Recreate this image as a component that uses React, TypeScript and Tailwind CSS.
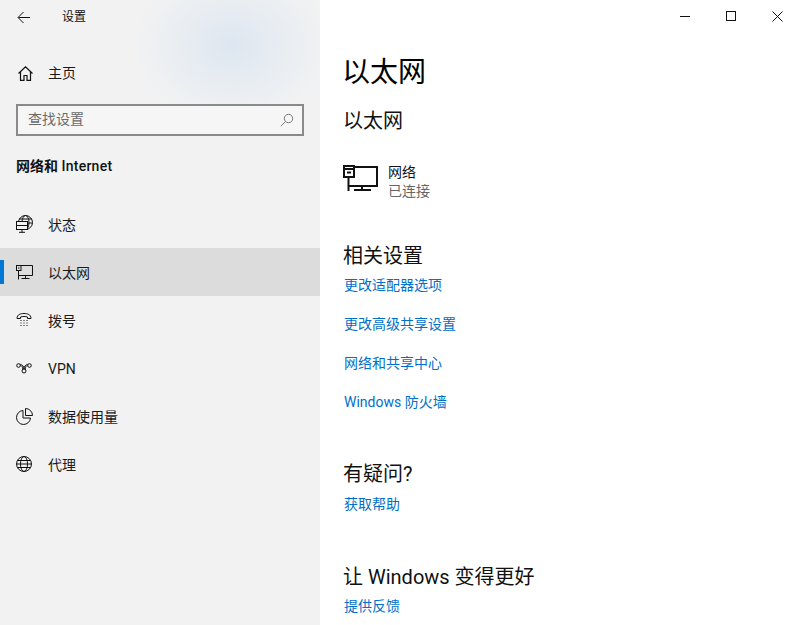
import React from "react";

const font = "font-['Roboto','Noto_Sans_CJK_SC',sans-serif]";

const BackIcon = () => (
  <svg width="14" height="13" viewBox="0 0 14 13" fill="none" stroke="#111" strokeWidth="1">
    <path d="M13 6.500H1.500M6.500 1 1 6.500 6.500 12" />
  </svg>
);

const HomeIcon = () => (
  <svg width="15" height="15" viewBox="0 0 15 15" fill="none" stroke="#111" strokeWidth="1.200">
    <path d="M.5 7.500 7.500 .8l7 6.700M2.500 6v8.300h3.500V9.500h3v4.800h3.500V6" />
  </svg>
);

const SearchIcon = () => (
  <svg width="14" height="14" viewBox="0 0 14 14" fill="none" stroke="#777" strokeWidth="1">
    <circle cx="8.500" cy="5.500" r="4.200" />
    <path d="M5.500 8.500 .8 13.200" />
  </svg>
);

const StatusIcon = () => (
  <svg width="17" height="18" viewBox="0 0 17 18" fill="none" stroke="#111" strokeWidth="1">
    <circle cx="9.500" cy="7.500" r="7" />
    <ellipse cx="9.500" cy="7.500" rx="3.500" ry="7" />
    <path d="M3 4h13M12 8h4.500" />
    <rect x=".5" y="6.500" width="11" height="8" fill="#f2f2f2" />
    <path d="M.5 10.500h11M6 14.500v2.800M3 17.300h6" />
  </svg>
);

const EthernetIcon = () => (
  <svg width="17" height="15" viewBox="0 0 17 15" fill="none" stroke="#111" strokeWidth="1">
    <path d="M3 .5h13.500v10H2.500M2.500 6v8.500M9.500 10.500v3.500M5.500 13.500h8" />
    <rect x=".5" y=".5" width="4.500" height="5" fill="#dcdcdc" />
    <path d="M2 3h1.500" />
  </svg>
);

const DialIcon = () => (
  <svg width="16" height="14" viewBox="0 0 16 14" fill="none" stroke="#111" strokeWidth="1">
    <path d="M1 5.500C1 1.500 4.500.5 8 .5s7 1 7 5h-3.500V4c-2-.7-5-.7-7 0v1.500z" />
    <path d="M4.500 7.500h1M7.500 7.500h1M10.500 7.500h1M4.500 10h1M7.500 10h1M10.500 10h1M4.500 12.500h1M7.500 12.500h1M10.500 12.500h1" />
  </svg>
);

const VpnIcon = () => (
  <svg width="16" height="11" viewBox="0 0 16 11" fill="none" stroke="#111" strokeWidth="1">
    <circle cx="2.500" cy="2.500" r="1.800" />
    <circle cx="13.500" cy="2.500" r="1.800" />
    <circle cx="8" cy="8" r="2" />
    <path d="M4.300 2.500c1.500 0 2.200 1.500 2.700 3.800M11.700 2.500c-1.500 0-2.200 1.500-2.700 3.800M4.300 1.200C6 1.500 8 4 9.500 6.500M11.700 1.200C10 1.500 8 4 6.500 6.500" />
  </svg>
);

const DataIcon = () => (
  <svg width="17" height="17" viewBox="0 0 17 17" fill="none" stroke="#111" strokeWidth="1">
    <path d="M7 2.500A7 7 0 1 0 14.500 10H7z" />
    <path d="M9.500.5a7 7 0 0 1 7 7h-7z" />
  </svg>
);

const GlobeIcon = () => (
  <svg width="16" height="16" viewBox="0 0 16 16" fill="none" stroke="#111" strokeWidth="1">
    <circle cx="8" cy="8" r="7.500" />
    <ellipse cx="8" cy="8" rx="3.500" ry="7.500" />
    <path d="M1.500 4.500h13M1.500 11.500h13M.5 8h15" />
  </svg>
);

const BigNetworkIcon = () => (
  <svg width="35" height="27" viewBox="0 0 35 27" fill="none" stroke="#111" strokeWidth="2">
    <path d="M5 2h29v19H5.500M5.500 12v14M19 21v5M11 25h17" />
    <rect x="1" y="1" width="10" height="11" fill="#fff" />
    <path d="M1 4h10M4 7.500h4" />
  </svg>
);

const navItems: { label: string; icon: React.ReactNode; active?: boolean }[] = [
  { label: "状态", icon: <StatusIcon /> },
  { label: "以太网", icon: <EthernetIcon />, active: true },
  { label: "拨号", icon: <DialIcon /> },
  { label: "VPN", icon: <VpnIcon /> },
  { label: "数据使用量", icon: <DataIcon /> },
  { label: "代理", icon: <GlobeIcon /> },
];

const NavRow = ({ label, icon, active }: { label: string; icon: React.ReactNode; active?: boolean }) => (
  <div className={`relative flex h-12 items-center ${active ? "bg-[#dcdcdc]" : ""}`}>
    {active && <div className="absolute left-0 top-3 h-6 w-1 bg-[#0078d7]" />}
    <div className="flex w-12 shrink-0 items-center justify-start pl-4">{icon}</div>
    <span className="mt-[2px] text-sm text-[#1a1a1a]">{label}</span>
  </div>
);

const SideBar = () => (
  <aside className="flex h-full w-80 shrink-0 flex-col bg-[radial-gradient(ellipse_100px_80px_at_232px_45px,#dde6f0_0%,#e8edf2_50%,#f2f2f2_100%)]">
    <div className="flex h-8 items-center pt-[2px]">
      <div className="flex w-[62px] items-center pl-[17px]">
        <BackIcon />
      </div>
      <span className="text-xs text-[#111]">设置</span>
    </div>
    <div className="mt-[17px] flex h-12 items-center">
      <div className="flex w-12 items-center pl-[18px]">
        <HomeIcon />
      </div>
      <span className="text-sm text-[#1a1a1a]">主页</span>
    </div>
    <div className="mx-4 mt-[7px] flex h-[32px] items-center justify-between border-2 border-[#8a8a8a] bg-[#f6f6f6] pl-[10px] pr-2">
      <span className="-mt-[2px] text-sm text-[#6b6b6b]">查找设置</span>
      <SearchIcon />
    </div>
    <h2 className="mt-5 pl-4 text-sm font-bold leading-5 text-[#111]">
      网络和 <span className="font-medium tracking-[0.25px]">Internet</span>
    </h2>
    <nav className="mt-6 flex flex-col">
      {navItems.map((item) => (
        <NavRow key={item.label} {...item} />
      ))}
    </nav>
  </aside>
);

const Link = ({ children, className = "" }: { children: React.ReactNode; className?: string }) => (
  <a className={`ml-px block text-sm leading-5 text-[#0070c9] ${className}`}>{children}</a>
);

const WindowControls = () => (
  <div className="absolute right-0 top-0 flex h-8">
    <div className="flex w-[46px] items-center justify-center">
      <svg width="10" height="10" viewBox="0 0 10 10" stroke="#111" strokeWidth="1"><path d="M0 5.500h10" /></svg>
    </div>
    <div className="flex w-[46px] items-center justify-center">
      <svg width="10" height="10" viewBox="0 0 10 10" fill="none" stroke="#111" strokeWidth="1"><rect x=".5" y=".5" width="9" height="9" /></svg>
    </div>
    <div className="flex w-[46px] items-center justify-center">
      <svg width="11" height="11" viewBox="0 0 11 11" stroke="#111" strokeWidth="1"><path d="M.5.5l10 10M10.500.5l-10 10" /></svg>
    </div>
  </div>
);

const Content = () => (
  <main className="relative h-full flex-1 overflow-hidden bg-white pl-[23px]">
    <WindowControls />
    <h1 className="-ml-px pt-[51px] text-[28px] leading-[44px] text-black">以太网</h1>
    <h2 className="mt-3 text-xl leading-7 text-[#111]">以太网</h2>
    <div className="mt-6 flex items-start gap-[10px]">
      <div className="mt-[6px]">
        <BigNetworkIcon />
      </div>
      <div className="mt-1">
        <div className="text-sm leading-[19px] text-[#111]">网络</div>
        <div className="text-sm leading-[19px] text-[#666]">已连接</div>
      </div>
    </div>
    <h2 className="mt-[41px] text-xl leading-7 text-[#111]">相关设置</h2>
    <Link className="mt-[5px]">更改适配器选项</Link>
    <Link className="mt-[19px]">更改高级共享设置</Link>
    <Link className="mt-[19px]">网络和共享中心</Link>
    <Link className="mt-[19px]">Windows 防火墙</Link>
    <h2 className="mt-[48px] text-xl leading-7 text-[#111]">有疑问?</h2>
    <Link className="mt-[6px]">获取帮助</Link>
    <h2 className="mt-[49px] text-xl leading-7 text-[#111]">让 Windows 变得更好</h2>
    <Link className="mt-[5px]">提供反馈</Link>
  </main>
);

export default function App() {
  return (
    <div className={`flex h-[625px] w-[800px] overflow-hidden ${font}`}>
      <SideBar />
      <Content />
    </div>
  );
}
